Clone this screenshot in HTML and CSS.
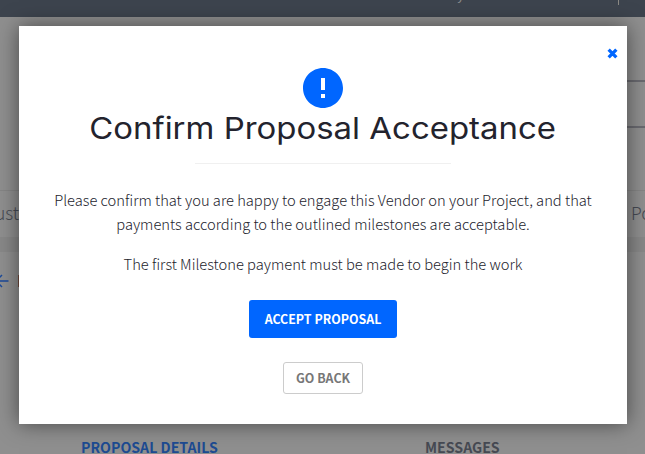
FILE: index.html
```html
<!DOCTYPE html>
<html lang="en">
<head>
<meta charset="utf-8">
<title>Confirm Proposal Acceptance</title>
<link rel="stylesheet" href="styles.css">
</head>
<body>
<div class="page">
  <header class="topbar"><span class="topbar-link">y</span><span class="topbar-divider"></span></header>
  <section class="search"><div class="search-box"></div></section>
  <nav class="tabs"><span class="tab-left">ust</span><span>Po</span></nav>
  <div class="band"></div>
  <div class="crumb">
    <svg class="back" viewBox="0 0 18 18"><path d="M17.5 9H4M11 3L5 9l6 6" fill="none" stroke="currentColor" stroke-width="1.5"/></svg>
    <span class="tag"></span>
  </div>
  <div class="columns"><span class="details">PROPOSAL DETAILS</span><span>MESSAGES</span></div>
</div>
<main class="modal">
  <button class="close" aria-label="Close"><svg viewBox="0 0 10 10"><path d="M1.5 1.5l7 7M8.5 1.5l-7 7" stroke="currentColor" stroke-width="3"/></svg></button>
  <svg class="alert" viewBox="0 0 24 24"><path fill="currentColor" d="M12 2C6.48 2 2 6.48 2 12s4.48 10 10 10 10-4.48 10-10S17.52 2 12 2zm1 15h-2v-2h2v2zm0-4h-2V7h2v6z"/></svg>
  <h1>Confirm Proposal Acceptance</h1>
  <hr>
  <p>Please confirm that you are happy to engage this Vendor on your Project, and that<br>payments according to the outlined milestones are acceptable.</p>
  <p>The first Milestone payment must be made to begin the work</p>
  <button class="accept">ACCEPT PROPOSAL</button>
  <button class="goback">GO BACK</button>
</main>
</body>
</html>
```
FILE: styles.css
```css
* { box-sizing: border-box; }
body {
  margin: 0;
  width: 645px;
  height: 454px;
  overflow: hidden;
  font-family: "Noto Sans CJK SC", "Open Sans", sans-serif;
}
.page { height: 454px; background: #8f8f8f; color: #464a53; overflow: hidden; }
.topbar { display: flex; justify-content: flex-end; height: 17px; background: #3d444e; color: #8f8f8f; }
.topbar-link { font-size: 13px; line-height: 13px; margin-top: -12px; margin-right: 154px; }
.topbar-divider { width: 1px; height: 5px; margin-right: 26px; background: #8b8984; }
.search { height: 173px; padding: 63px 0 0 400px; }
.search-box { height: 48px; border: 2px solid #6a6a70; border-right: 0; }
.tabs {
  display: flex;
  justify-content: space-between;
  height: 47px;
  border-top: 1px solid #858585;
  font-size: 17.5px;
  font-weight: 300;
  line-height: 44px;
}
.tabs span:last-child { width: 14px; }
.tab-left { margin-left: -5px; }
.band { height: 15px; background: #888; }
.crumb { display: flex; align-items: center; height: 57px; color: #1b4a9b; }
.back { width: 18px; height: 18px; margin-left: -9px; }
.tag { width: 8px; height: 12px; margin-left: 9px; background: #70493c; }
.columns {
  display: grid;
  grid-template-columns: 344px 1fr;
  padding: 127px 0 0 81px;
  font-size: 14.15px;
  font-weight: 700;
  line-height: 22px;
}
.details { color: #1d4b92; }
.modal {
  position: absolute;
  left: 19px;
  top: 26px;
  width: 608px;
  height: 398px;
  padding-top: 38px;
  display: flex;
  flex-direction: column;
  align-items: center;
  background: #fff;
  color: #23232d;
  box-shadow: 0 0 20px rgba(0, 0, 0, .5);
}
.close {
  position: absolute;
  top: 22px;
  right: 9px;
  width: 11px;
  height: 11px;
  padding: 0;
  border: 0;
  background: none;
  color: #06f;
}
.close svg { display: block; width: 11px; height: 11px; }
.alert { width: 48px; height: 48px; color: #06f; }
h1 {
  margin: -4px 0 0;
  color: #23232d;
  font: 400 30px/40px Inter, sans-serif;
  white-space: nowrap;
  transform: scaleX(1.098);
}
hr { width: 256px; height: 1px; margin: 15px 0 24px; border: 0; background: #f0f0f0; }
p { margin: 0 0 16px; font-size: 14.7px; font-weight: 300; line-height: 24px; text-align: center; white-space: nowrap; }
.accept, .goback { font-family: inherit; font-size: 12.4px; font-weight: 700; padding: 0; border-radius: 3px; white-space: nowrap; }
.accept { width: 148px; height: 38px; margin-top: 8px; border: 0; background: #06f; color: #fff; }
.goback { width: 80px; height: 32px; margin-top: 24px; border: 1px solid #ccc; background: #fff; color: #777; }
```
